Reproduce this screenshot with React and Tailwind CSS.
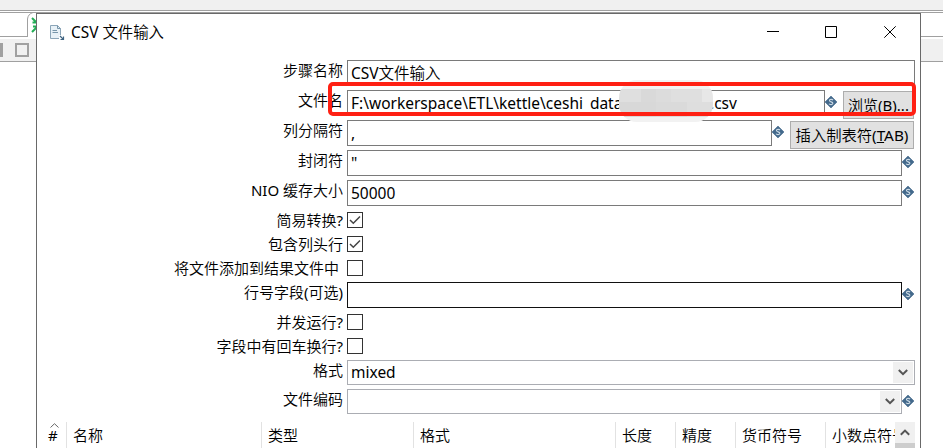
import React from "react";

/* Latin runs use the regular weight, Chinese runs the lighter one. */
function Mixed({ text }) {
  return text.split(/([\x21-\x7e]+)/).map((part, i) =>
    i % 2 ? <span key={i} className="font-normal">{part}</span> : part
  );
}

function Variable() {
  return (
    <svg className="h-3 w-3 shrink-0" viewBox="0 0 12 12">
      <path d="M6 0L12 6L6 12L0 6Z" fill="#446a8c" stroke="#446a8c" strokeWidth="0.6" />
      <path d="M8 4.1C7.4 3.1 4.4 3 4.4 4.6C4.4 6.2 7.9 5.6 7.9 7.3C7.9 9 4.7 8.9 4 7.8" fill="none" stroke="#cbd9e4" strokeWidth="1.1" />
    </svg>
  );
}

function Row({ label, className = "", labelClass = "-mt-px", children }) {
  return (
    <div className={"flex shrink-0 " + className}>
      <div className={"mr-1 w-[306px] shrink-0 whitespace-pre text-right leading-[22px] " + labelClass}><Mixed text={label} /></div>
      {children}
    </div>
  );
}

function Field({ className = "w-[555px] border-[#7a7a7a]", children }) {
  return <div className={"h-[26px] shrink-0 whitespace-nowrap border pl-[3px] text-[15.5px] leading-[24px] " + className}>{children}</div>;
}

function Check({ on }) {
  return (
    <div className="h-4 w-4 shrink-0 border border-[#333]">
      {on && (
        <svg className="h-[14px] w-[14px]" viewBox="0 0 14 14" fill="none" stroke="#444" strokeWidth="1.5">
          <path d="M2 7L5.3 10.2L12 3.5" />
        </svg>
      )}
    </div>
  );
}

function Chevron({ up }) {
  return (
    <svg className="h-[7px] w-[10px]" viewBox="0 0 10 7" fill="none" stroke="#555" strokeWidth="2">
      <path d={up ? "M0.8 5.8L5 1.6L9.2 5.8" : "M0.8 1L5 5.2L9.2 1"} />
    </svg>
  );
}

function Combo({ className, children }) {
  return (
    <div className={"flex h-[25px] shrink-0 justify-between border border-[#abadb3] p-px pl-[3px] text-[15.5px] font-normal leading-[21px] " + className}>
      <span>{children}</span>
      <span className="flex h-[21px] w-5 items-center justify-center bg-[#f0f0f0]"><Chevron /></span>
    </div>
  );
}

function Column({ className, children }) {
  return <div className={"shrink-0 overflow-hidden whitespace-nowrap border-r border-[#e2e2e2] pl-[6px] leading-[26px] " + className}>{children}</div>;
}

export default function App() {
  return (
    <div className="relative h-[448px] w-[943px] overflow-hidden bg-white font-['Noto_Sans','Noto_Sans_CJK_SC',sans-serif] text-[15px] font-[350] text-black">
      <div className="h-[11px] border-b border-[#a0a0a0] bg-[#f0f0f0]" />
      <div className="mt-px h-[25px] border-y border-[#a0a0a0]" />
      <div className="mt-[2px] flex h-[23px] items-start border-b border-[#a0a0a0] bg-[#f0f0f0]">
        <div className="mt-1 h-[14px] w-[3px] bg-[#a0a0a0]" />
        <div className="ml-3 mt-1 h-[14px] w-[14px] border-2 border-[#a0a0a0]" />
      </div>
      <svg className="absolute left-0 top-3 h-[26px] w-10" viewBox="0 0 40 26" fill="none">
        <path d="M28 1H40V25H28Z" fill="#fff" />
        <path d="M27.5 25V7Q28 2 33 .5" stroke="#a0a0a0" />
        <path d="M32 6L37 11M32 20L37 15M32.5 10.5H37V6M33 14.5H37V20" stroke="#22ac55" strokeWidth="2" />
      </svg>

      <div className="absolute left-9 top-[13px] flex h-[440px] w-[885px] flex-col border border-[#696969] bg-white">
        <div className="flex h-[46px] shrink-0">
          <svg className="ml-3 mt-[10px] h-[18px] w-4" viewBox="0 0 16 18" fill="none">
            <path d="M1.5 1.5H8.5L11.5 4.5V14.5H1.5Z" fill="#e8f1f7" stroke="#8ba5b8" />
            <path d="M8.5 1.5V4.5H11.5M3.5 6.5H8M3.5 8.5H9" stroke="#7896aa" />
            <path d="M10 11H16V17H10Z" fill="#fff" />
            <path d="M11 12L14.5 15.5M14.5 12.5V15.5H11.5" stroke="#3f6482" strokeWidth="1.2" />
          </svg>
          <span className="ml-[6px] mt-2 text-[15.4px] leading-[22px]"><Mixed text="CSV 文件输入" /></span>
          <svg className="ml-auto mr-6 mt-3 h-3 w-[129px]" viewBox="0 0 129 12" fill="none" stroke="#000">
            <path d="M0 5.5H12M58.5 .5H69.5V11.5H58.5ZM117.3 .3L128.7 11.7M128.7 .3L117.3 11.7" />
          </svg>
        </div>
        <Row label="步骤名称" className="h-[30px]">
          <Field className="w-[568px] border-[#7a7a7a]"><Mixed text="CSV文件输入" /></Field>
        </Row>
        <Row label="文件名" className="h-[30px]">
          <Field className="flex w-[478px] border-[#7a7a7a] font-normal">
            <span className="w-[269px]">F:\workerspace\ETL\kettle\ceshi<span className="relative top-[3px]">_</span>data</span>
            <span className="ml-[90px]">.csv</span>
          </Field>
          <div className="mt-[6px]"><Variable /></div>
          <div className="ml-[6px] mt-px h-7 w-[71px] whitespace-nowrap border border-[#adadad] bg-[#e1e1e1] text-center leading-[26px]"><Mixed text="浏览(B)..." /></div>
        </Row>
        <Row label="列分隔符" className="h-[30px]">
          <Field className="w-[425px] border-[#7a7a7a] font-normal">,</Field>
          <div className="mt-[6px]"><Variable /></div>
          <div className="ml-[6px] mt-px h-7 w-[124px] whitespace-nowrap border border-[#adadad] bg-[#e1e1e1] text-center text-[15.3px] leading-[26px]">插入制表符<span className="font-normal">(<u>T</u>AB)</span></div>
        </Row>
        <Row label="封闭符" className="h-[30px]">
          <Field className="w-[555px] border-[#7a7a7a] font-normal">"</Field>
          <div className="mt-[6px]"><Variable /></div>
        </Row>
        <Row label="NIO 缓存大小" className="h-8">
          <Field className="w-[555px] border-[#7a7a7a] font-normal">50000</Field>
          <div className="mt-[6px]"><Variable /></div>
        </Row>
        <Row label="简易转换?" className="h-6" labelClass="-mt-[3px]"><Check on /></Row>
        <Row label="包含列头行" className="h-6" labelClass="-mt-[3px]"><Check on /></Row>
        <Row label="将文件添加到结果文件中 " className="h-[22px]" labelClass="-mt-[3px]"><Check /></Row>
        <Row label="行号字段(可选)" className="h-8">
          <Field className="w-[555px] border-[#111]" />
          <div className="mt-[6px]"><Variable /></div>
        </Row>
        <Row label="并发运行?" className="h-6" labelClass="-mt-[3px]"><Check /></Row>
        <Row label="字段中有回车换行?" className="h-[22px]" labelClass="-mt-[3px]"><Check /></Row>
        <Row label="格式" className="h-[29px]">
          <Combo className="w-[568px]">mixed</Combo>
        </Row>
        <Row label="文件编码" className="h-[33px]">
          <Combo className="w-[555px]" />
          <div className="mt-[6px]"><Variable /></div>
        </Row>
        <div className="ml-[5px] flex h-[30px] w-[873px] shrink-0">
          <div className="relative w-[25px] shrink-0 border-r border-[#e2e2e2] pl-[6px] font-normal leading-[26px]">
            #
            <svg className="absolute left-2 top-px h-[5px] w-[9px]" viewBox="0 0 9 5" fill="none" stroke="#666"><path d="M.5 4.5L4.5 .7L8.5 4.5" /></svg>
          </div>
          <Column className="w-[195px]">名称</Column>
          <Column className="w-[152px]">类型</Column>
          <Column className="w-[202px]">格式</Column>
          <Column className="w-[60px]">长度</Column>
          <Column className="w-[60px]">精度</Column>
          <Column className="w-[90px]">货币符号</Column>
          <div className="w-[69px] shrink-0 overflow-hidden whitespace-nowrap pl-[6px] leading-[26px]">小数点符号</div>
          <div className="w-5 shrink-0 bg-[#cdcdcd]">
            <div className="flex h-[21px] items-center justify-center bg-[#f0f0f0]"><Chevron up /></div>
          </div>
        </div>
      </div>

      <div className="absolute left-[619px] top-[80px] h-[42px] w-[94px] overflow-hidden rounded-[18px] bg-[#f2f2f2]">
        <div className="mt-[9px] flex h-[13px]">
          <div className="w-[22px] bg-[#dfdfdf]" />
          <div className="w-[15px] bg-[#d9d9d9]" />
          <div className="w-[15px] bg-[#dcdcdc]" />
          <div className="w-[31px] bg-[#dfdfdf]" />
          <div className="w-[11px] bg-[#e7e7e7]" />
        </div>
        <div className="flex h-[15px]">
          <div className="w-[37px] bg-[#d8d8d8]" />
          <div className="w-[31px] bg-[#dadada]" />
          <div className="w-[26px] bg-[#dedede]" />
        </div>
      </div>
      <div className="absolute left-[328px] top-[82px] h-[34px] w-[588px] rounded-[5px] border-4 border-[#ff2013]" />
    </div>
  );
}
